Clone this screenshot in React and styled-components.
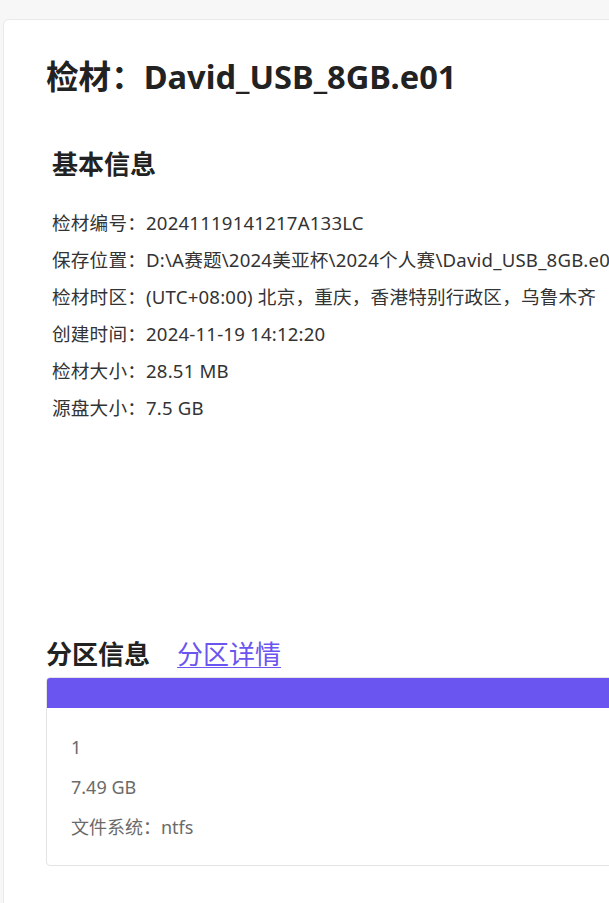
import React from "react";
import styled, { createGlobalStyle } from "styled-components";

const Global = createGlobalStyle`
  html, body { margin: 0; padding: 0; overflow: hidden; background: #f7f7f7; }
  body { font-family: "Noto Sans", "Noto Sans CJK SC", sans-serif; }
`;

const Page = styled.div`
  padding: 19px 0 0 3px;
  height: 903px;
  box-sizing: border-box;
  overflow: hidden;
`;

const Card = styled.div`
  width: 1000px;
  min-height: 1000px;
  background: #fff;
  border: 1px solid #e9e9e9;
  border-radius: 6px;
  padding: 33px 0 0 42px;
  box-sizing: border-box;
`;

const Title = styled.h1`
  margin: 0;
  font-size: 32.6px;
  line-height: 48px;
  font-weight: 700;
  color: #222;
  white-space: nowrap;
`;

const Section = styled.section`
  padding-left: 6px;
  margin-top: 44px;
`;

const SectionTitle = styled.h2`
  margin: 0;
  font-size: 26px;
  line-height: 39px;
  font-weight: 700;
  color: #222;
`;

const InfoList = styled.div`
  margin-top: 20px;
  display: flex;
  flex-direction: column;
`;

const InfoRow = styled.div`
  font-size: 18.6px;
  letter-spacing: 0.2px;
  line-height: 37px;
  color: #333;
  white-space: nowrap;
`;

const PartHeader = styled.div`
  margin-top: 209px;
  display: flex;
  align-items: baseline;
  gap: 27px;
`;

const DetailLink = styled.a`
  font-size: 26px;
  line-height: 39px;
  color: #6b55f0;
  text-decoration: underline;
  text-underline-offset: 3px;
  text-decoration-thickness: 1px;
  cursor: pointer;
`;

const PartTable = styled.div`
  margin-top: 3px;
  border: 1px solid #e4e4e4;
  border-radius: 4px;
  overflow: hidden;
`;

const PartHead = styled.div`
  height: 30px;
  background: #6b55f1;
`;

const PartBody = styled.div`
  padding: 19px 24px 18px;
  display: flex;
  flex-direction: column;
`;

const PartRow = styled.div`
  font-size: 18px;
  line-height: 40px;
  color: #6a6a6a;
`;

const info = [
  ["检材编号", "20241119141217A133LC"],
  ["保存位置", "D:\\A赛题\\2024美亚杯\\2024个人赛\\David_USB_8GB.e01"],
  ["检材时区", "(UTC+08:00) 北京，重庆，香港特别行政区，乌鲁木齐"],
  ["创建时间", "2024-11-19 14:12:20"],
  ["检材大小", "28.51 MB"],
  ["源盘大小", "7.5 GB"],
];

export default function App() {
  return (
    <>
      <Global />
      <Page>
        <Card>
          <Title>检材：David_USB_8GB.e01</Title>
          <Section>
            <SectionTitle>基本信息</SectionTitle>
            <InfoList>
              {info.map(([k, v]) => (
                <InfoRow key={k}>
                  {k}：{v}
                </InfoRow>
              ))}
            </InfoList>
          </Section>
          <PartHeader>
            <SectionTitle>分区信息</SectionTitle>
            <DetailLink>分区详情</DetailLink>
          </PartHeader>
          <PartTable>
            <PartHead />
            <PartBody>
              <PartRow>1</PartRow>
              <PartRow>7.49 GB</PartRow>
              <PartRow>文件系统：ntfs</PartRow>
            </PartBody>
          </PartTable>
        </Card>
      </Page>
    </>
  );
}
